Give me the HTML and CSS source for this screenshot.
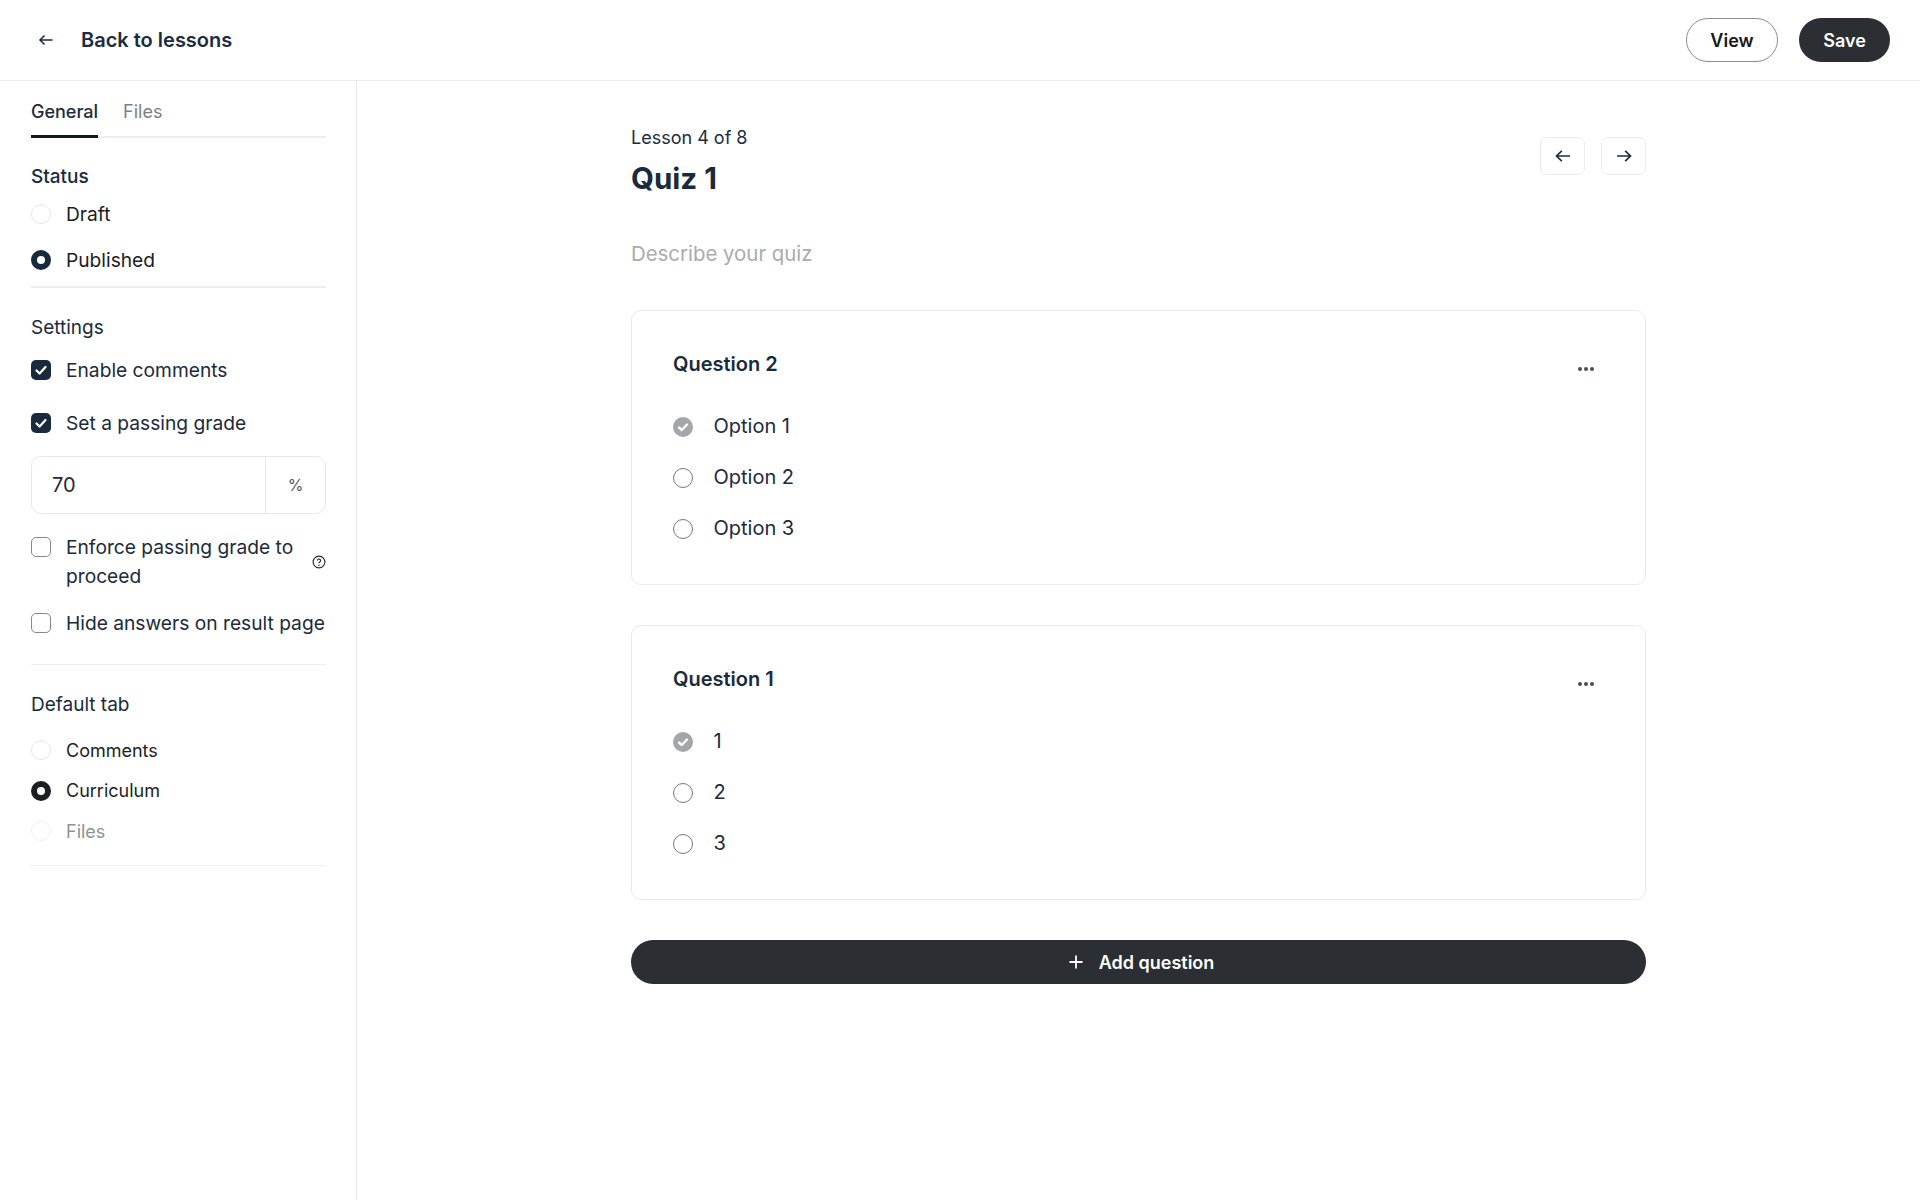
FILE: index.html
```html
<!DOCTYPE html>
<html lang="en">
<head>
  <meta charset="UTF-8" />
  <title>Quiz 1</title>
  <link rel="stylesheet" href="styles.css">
</head>
<body>
  <header class="topbar">
    <a class="back-link">
      <svg class="back-icon" viewBox="0 0 16 16"><path d="M14.5 8H2M6.5 3.5 2 8 6.5 12.5"/></svg>
      <span>Back to lessons</span>
    </a>
    <div class="top-actions">
      <button class="pill pill-outline">View</button>
      <button class="pill pill-dark">Save</button>
    </div>
  </header>

  <div class="layout">
    <aside class="sidebar">
      <div class="tabs">
        <span class="tab active">General</span>
        <span class="tab">Files</span>
      </div>

      <section class="group group-status">
        <h3 class="group-title strong">Status</h3>
        <label class="row row-status"><span class="radio"></span>Draft</label>
        <label class="row row-status"><span class="radio on navy"></span>Published</label>
      </section>

      <section class="group group-settings">
        <h3 class="group-title">Settings</h3>
        <label class="row row-check first"><span class="check on"><svg viewBox="0 0 20 20"><path d="M5.5 10.5 8.6 13.5 14.5 7"/></svg></span>Enable comments</label>
        <label class="row row-check second"><span class="check on"><svg viewBox="0 0 20 20"><path d="M5.5 10.5 8.6 13.5 14.5 7"/></svg></span>Set a passing grade</label>
        <div class="grade-input">
          <span class="grade-value">70</span>
          <span class="grade-unit">%</span>
        </div>
        <div class="row row-enforce">
          <span class="check"></span>
          <span class="enforce-text">Enforce passing grade to proceed</span>
          <svg class="help-icon" viewBox="0 0 14 14"><circle cx="7" cy="7" r="5.9"/><path d="M5.4 5.6A1.6 1.6 0 1 1 7.8 7C7.2 7.4 7 7.6 7 8.3"/><circle class="dot" cx="7" cy="10.2" r=".7"/></svg>
        </div>
        <label class="row row-check third"><span class="check"></span>Hide answers on result page</label>
      </section>

      <section class="group group-tab">
        <h3 class="group-title">Default tab</h3>
        <label class="row row-tab first"><span class="radio"></span>Comments</label>
        <label class="row row-tab"><span class="radio on"></span>Curriculum</label>
        <label class="row row-tab disabled"><span class="radio"></span>Files</label>
      </section>
    </aside>

    <main class="content">
      <div class="lesson-head">
        <div>
          <div class="lesson-count">Lesson 4 of 8</div>
          <h1 class="lesson-title">Quiz 1</h1>
        </div>
        <div class="lesson-nav">
          <button class="nav-btn"><svg viewBox="0 0 16 16"><path d="M15 8H1.5M6.8 2.8 1.5 8 6.8 13.2"/></svg></button>
          <button class="nav-btn"><svg viewBox="0 0 16 16"><path d="M1 8H14.5M9.2 2.8 14.5 8 9.2 13.2"/></svg></button>
        </div>
      </div>

      <p class="describe">Describe your quiz</p>

      <article class="question">
        <div class="question-head">
          <h2>Question 2</h2>
          <span class="dots"><i></i><i></i><i></i></span>
        </div>
        <div class="option"><span class="answer correct"><svg viewBox="0 0 20 20"><path d="M6 10.5 8.8 13 14 7.5"/></svg></span>Option 1</div>
        <div class="option"><span class="answer"></span>Option 2</div>
        <div class="option"><span class="answer"></span>Option 3</div>
      </article>

      <article class="question">
        <div class="question-head">
          <h2>Question 1</h2>
          <span class="dots"><i></i><i></i><i></i></span>
        </div>
        <div class="option"><span class="answer correct"><svg viewBox="0 0 20 20"><path d="M6 10.5 8.8 13 14 7.5"/></svg></span>1</div>
        <div class="option"><span class="answer"></span>2</div>
        <div class="option"><span class="answer"></span>3</div>
      </article>

      <button class="add-question">
        <svg viewBox="0 0 16 16"><path d="M8 1.5v13M1.5 8h13"/></svg>
        Add question
      </button>
    </main>
  </div>
</body>
</html>
```

FILE: styles.css
```css
* {
  box-sizing: border-box;
}
body {
  margin: 0;
  height: 1200px;
  overflow: hidden;
  background-color: #fff;
  color: #1a2a3d;
  font-family: 'Inter', sans-serif;
}
button {
  font-family: inherit;
  cursor: pointer;
}
svg {
  display: block;
  fill: none;
  stroke: currentColor;
}

.topbar {
  height: 81px;
  padding: 0 30px 0 38px;
  border-bottom: 1px solid #e8eaec;
  display: flex;
  align-items: center;
  justify-content: space-between;
}
.back-link {
  display: flex;
  align-items: center;
  gap: 27px;
  font-size: 20px;
  font-weight: 600;
  color: #1c2b3f;
}
.back-icon {
  width: 16px;
  height: 16px;
  stroke-width: 1.5;
}
.top-actions {
  display: flex;
  gap: 21px;
}
.pill {
  height: 44px;
  border-radius: 22px;
  font-size: 18px;
  font-weight: 600;
}
.pill-outline {
  width: 92px;
  background: #fff;
  border: 1.5px solid #8b8d91;
  color: #16181c;
}
.pill-dark {
  width: 91px;
  background: #2b2e33;
  border: none;
  color: #fff;
}

.layout {
  display: flex;
  height: 1119px;
}
.sidebar {
  width: 357px;
  padding: 0 30px 0 31px;
  border-right: 1px solid #e8eaec;
}
.tabs {
  display: flex;
  gap: 25px;
  height: 57px;
  border-bottom: 2px solid #eceef0;
  font-size: 18px;
}
.tab {
  padding-top: 20px;
  color: #7d8186;
}
.tab.active {
  height: 57px;
  font-weight: 500;
  color: #1c2b3f;
  border-bottom: 3px solid #14171b;
}
.group {
  border-bottom: 2px solid #eceef0;
}
.group-title {
  margin: 0;
  font-size: 19px;
  line-height: 24px;
  font-weight: 400;
}
.group-title.strong {
  font-weight: 500;
}
.group-status {
  padding-top: 27px;
  height: 150px;
}
.group-settings {
  padding-top: 28px;
  height: 377px;
  border-bottom-width: 1px;
}
.group-tab {
  padding-top: 28px;
  height: 201px;
  border-bottom-width: 1px;
}
.row {
  display: flex;
  align-items: center;
  gap: 15px;
  font-size: 19.2px;
  color: #1a2a3d;
}
.row-status {
  height: 46px;
  color: #1b1e22;
}
.group-status .group-title + .row {
  margin-top: 2px;
}
.row-check {
  height: 30px;
}
.row-check.first {
  margin-top: 15px;
}
.row-check.second {
  margin-top: 23px;
}
.row-check.third {
  margin-top: 17px;
}
.row-tab {
  height: 40.5px;
  font-size: 18px;
  color: #1b1e22;
}
.row-tab.first {
  margin-top: 13px;
}
.row-tab.disabled {
  color: #8f9296;
}
.row-tab.disabled .radio {
  border-color: #f1f2f3;
}

.radio {
  flex: none;
  width: 20px;
  height: 20px;
  border-radius: 50%;
  border: 1.5px solid #e6e7e9;
  background: #fff;
}
.radio.on {
  border: 6px solid #1b1e22;
}
.radio.on.navy {
  border-color: #1a2a3d;
}
.check {
  flex: none;
  width: 20px;
  height: 20px;
  border-radius: 5px;
  border: 1.5px solid #85888c;
  background: #fff;
}
.check.on {
  border: none;
  background: #1a2a3d;
  color: #fff;
}
.check svg {
  width: 20px;
  height: 20px;
  stroke-width: 2.2;
  stroke-linecap: round;
  stroke-linejoin: round;
}

.grade-input {
  display: flex;
  height: 58px;
  margin-top: 18px;
  border: 1.5px solid #e6e8ea;
  border-radius: 10px;
  font-size: 20px;
  color: #26292e;
}
.grade-value {
  flex: 1;
  display: flex;
  align-items: center;
  padding-left: 20px;
  border-right: 1px solid #e6e8ea;
}
.grade-unit {
  width: 59px;
  display: flex;
  align-items: center;
  justify-content: center;
  font-size: 16px;
  color: #55595e;
}
.row-enforce {
  align-items: flex-start;
  margin-top: 19px;
  line-height: 29px;
}
.row-enforce .check {
  margin-top: 4px;
}
.enforce-text {
  flex: 1;
}
.help-icon {
  flex: none;
  width: 14px;
  height: 14px;
  margin: 22px 0 0 -15px;
  stroke-width: 1.1;
  color: #22262b;
}
.help-icon .dot {
  fill: currentColor;
  stroke: none;
}

.content {
  width: 1015px;
  margin-left: 274px;
  padding-top: 46px;
}
.lesson-head {
  display: flex;
  justify-content: space-between;
}
.lesson-count {
  font-size: 18px;
  line-height: 22px;
  color: #1c2b3f;
}
.lesson-title {
  margin: 9px 0 0;
  font-size: 29.5px;
  line-height: 40px;
  font-weight: 700;
  color: #1a2a3d;
}
.lesson-nav {
  display: flex;
  gap: 16px;
  margin-top: 10px;
}
.nav-btn {
  width: 45px;
  height: 38px;
  padding: 0;
  background: #fff;
  border: 1.5px solid #e9ebed;
  border-radius: 7px;
  display: flex;
  align-items: center;
  justify-content: center;
  color: #1f2d40;
}
.nav-btn svg {
  width: 16px;
  height: 16px;
  stroke-width: 1.7;
}
.describe {
  margin: 41px 0 41px;
  font-size: 20.4px;
  line-height: 30px;
  color: #a9abae;
}
.question {
  height: 275px;
  margin-bottom: 40px;
  padding: 0 41px;
  border: 1.5px solid #e8eaec;
  border-radius: 10px;
}
.question-head {
  height: 89px;
  padding-top: 40px;
  display: flex;
  justify-content: space-between;
}
.question-head h2 {
  margin: 0;
  font-size: 20px;
  line-height: 26px;
  font-weight: 600;
  color: #1a2a3d;
}
.dots {
  display: flex;
  gap: 2px;
  margin: 16px 10px 0 0;
}
.dots i {
  width: 4px;
  height: 4px;
  border-radius: 50%;
  background: #4a4e53;
}
.option {
  display: flex;
  align-items: center;
  gap: 20.5px;
  height: 51px;
  font-size: 20px;
  color: #1c2b3f;
}
.answer {
  flex: none;
  width: 20px;
  height: 20px;
  margin-top: 2px;
  border-radius: 50%;
  border: 1.5px solid #75787c;
}
.answer.correct {
  border: none;
  background: #a5a6a8;
  color: #fff;
}
.answer svg {
  width: 20px;
  height: 20px;
  stroke-width: 2.4;
  stroke-linecap: round;
  stroke-linejoin: round;
}
.add-question {
  width: 100%;
  height: 44px;
  padding-left: 11px;
  border: none;
  border-radius: 22px;
  background: #2b2e33;
  color: #fff;
  font-size: 18px;
  font-weight: 600;
  display: flex;
  align-items: center;
  justify-content: center;
  gap: 15px;
}
.add-question svg {
  width: 16px;
  height: 16px;
  stroke-width: 1.8;
}
```
